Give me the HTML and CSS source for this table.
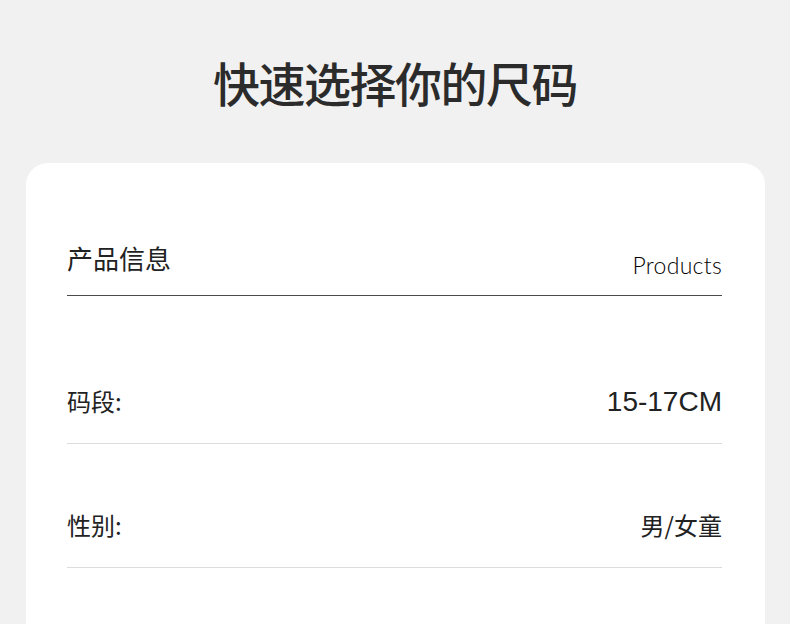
FILE: index.html
```html
<!DOCTYPE html>
<html lang="zh">
<head>
<meta charset="utf-8">
<title>快速选择你的尺码</title>
<link rel="stylesheet" href="styles.css">
</head>
<body>
<div class="page">
  <h1 class="title">快速选择你的尺码</h1>
  <section class="card">
    <div class="card-head">
      <span class="head-cn">产品信息</span>
      <span class="head-en">Products</span>
    </div>
    <div class="rows">
      <div class="row">
        <span class="label">码段:</span>
        <span class="value value-num">15-17CM</span>
      </div>
      <div class="row">
        <span class="label">性别:</span>
        <span class="value value-cn">男/女童</span>
      </div>
    </div>
  </section>
</div>
</body>
</html>
```
FILE: styles.css
```css
html, body {
  margin: 0;
  padding: 0;
  background: #f1f1f1;
}
body {
  font-family: "Noto Sans CJK SC", "Noto Sans", sans-serif;
  color: #222;
  overflow: hidden;
}
.page {
  width: 790px;
  height: 624px;
  padding-top: 52px;
  box-sizing: border-box;
  overflow: hidden;
}
.title {
  margin: 0;
  height: 60px;
  line-height: 60px;
  text-align: center;
  font-size: 47px;
  font-weight: 500;
  letter-spacing: -1.5px;
  color: #2b2b2b;
}
.card {
  margin: 51px 25px 0 26px;
  background: #fff;
  border-radius: 22px;
  padding: 0 43px 0 41px;
  height: 500px;
}
.card-head {
  display: flex;
  justify-content: space-between;
  align-items: flex-start;
  padding-top: 79px;
  height: 53px;
  border-bottom: 1px solid #4a4a4a;
}
.head-cn {
  font-size: 26px;
  line-height: 32px;
  color: #222;
}
.head-en {
  font-family: "Lato", "Noto Sans", sans-serif;
  font-weight: 300;
  font-size: 23px;
  line-height: 23px;
  letter-spacing: 0.3px;
  margin-top: 12px;
  color: #000;
}
.rows {
  padding-top: 24px;
}
.row {
  display: flex;
  justify-content: space-between;
  align-items: baseline;
  padding: 66px 0 27px;
  height: 30px;
  border-bottom: 1px solid #dcdcdc;
}
.label {
  font-size: 24px;
  line-height: 30px;
}
.value {
  line-height: 30px;
}
.value-num {
  font-family: "Liberation Sans", "Noto Sans", sans-serif;
  font-size: 28px;
}
.value-cn {
  font-size: 24px;
}
```
